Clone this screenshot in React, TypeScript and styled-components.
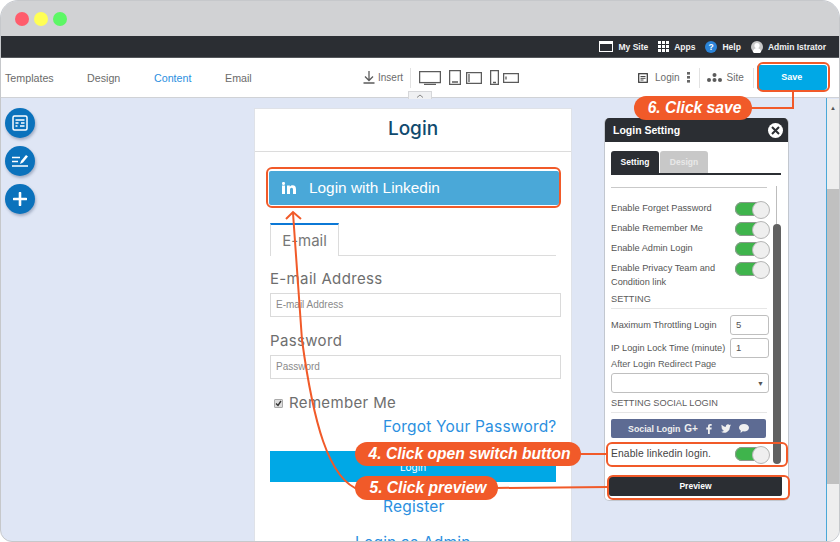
import React from "react";
import styled, { createGlobalStyle } from "styled-components";

const Global = createGlobalStyle`
  html, body { margin: 0; padding: 0; background: #fff; }
  * { box-sizing: border-box; }
  body { font-family: "Liberation Sans", Arial, sans-serif; }
`;

const Win = styled.div`
  position: relative; width: 840px; height: 542px; overflow: hidden;
  border-radius: 18px 18px 12px 12px; display: flex; flex-direction: column;
  background: #dfe6f5; border: 1px solid #c6c8cb;
`;
const TitleBar = styled.div`
  height: 35px; background: #d1d2d4; display: flex; align-items: center; gap: 5px; padding: 0 0 0 14px; flex: none;
`;
const Dot = styled.span<{ $c: string }>`
  width: 14px; height: 14px; border-radius: 50%; background: ${p => p.$c};
`;
const TopBar = styled.div`
  height: 22px; background: #2b2e33; flex: none; display: flex; justify-content: flex-end; align-items: center;
  gap: 10px; padding-right: 13px; color: #f2f2f2; font-size: 8.5px; font-weight: 700; border-bottom: 1px solid #55585c;
`;
const TopItem = styled.span`
  display: flex; align-items: center; gap: 5px; white-space: nowrap;
`;
const Toolbar = styled.div`
  height: 40px; background: #fff; flex: none; display: flex; align-items: center; border-bottom: 1px solid #d0d2d6;
  color: #6b6b6b; font-size: 10.7px; padding: 0 10px 0 4px;
`;
const NavLink = styled.span<{ $w: number; $on?: boolean }>`
  width: ${p => p.$w}px; flex: none; color: ${p => (p.$on ? "#2b8fe0" : "#6b6b6b")};
`;
const Spacer = styled.span<{ $w: number }>`
  width: ${p => p.$w}px; flex: none;
`;
const ToolItem = styled.span<{ $gap?: number }>`
  display: flex; align-items: center; gap: ${p => p.$gap ?? 3}px; font-size: 10px; flex: none; white-space: nowrap;
`;
const VLine = styled.span`
  width: 1px; height: 20px; background: #e2e2e2; flex: none;
`;
const SaveBtn = styled.button`
  width: 70px; height: 25px; border: 0; border-radius: 3px; background: #00a8e6; color: #fff; font: 700 9px "Liberation Sans", sans-serif; flex: none; padding: 0 0 1px;
`;
const ChevronTab = styled.div`
  position: absolute; left: 407px; top: 90px; width: 24px; height: 8px; background: #eff0f2;
  border: 1px solid #d6d7da; border-bottom: 0; display: flex; justify-content: center; align-items: center;
`;
const Canvas = styled.div`
  flex: 1; min-height: 0; display: flex; align-items: flex-start; padding: 10px 0 0 4px; border-right: 1px solid #4aa8d8;
  margin-right: 12px; position: relative;
`;
const Rail = styled.div`
  width: 30px; flex: none; display: flex; flex-direction: column; gap: 8px; margin-right: 219px;
`;
const RailBtn = styled.div`
  width: 30px; height: 30px; border-radius: 50%; background: #0b72bc; display: flex; align-items: center; justify-content: center;
  box-shadow: 1px 2px 3px rgba(40,60,100,.35);
`;
const Card = styled.div`
  width: 318px; height: 440px; flex: none; background: #fff; border: 1px solid #dfe2e8; overflow: hidden;
  font-family: Inter, sans-serif; color: #6e6e6e; margin-right: 32px;
`;
const CardHead = styled.div`
  height: 43px; border-bottom: 1px solid #dcdcdc; display: flex; align-items: center; justify-content: center;
  font-size: 19px; font-weight: 500; color: #0f4a6e; padding-bottom: 4px;
`;
const CardBody = styled.div`
  padding: 19px 14px 0 15px; display: flex; flex-direction: column;
`;
const LinkedBtn = styled.div`
  height: 34px; width: 290px; margin-left: -1px; background: #4aa8d8; border-radius: 2px; color: #fff; display: flex; align-items: center;
  font: 400 15.4px "Liberation Sans", sans-serif; gap: 13px; padding-left: 13px;
`;
const Tabs = styled.div`
  margin-top: 18px; width: 286px; height: 33px; border-bottom: 1px solid #dcdcdc; display: flex;
`;
const EmailTab = styled.div`
  width: 69px; height: 33px; border: 1px solid #dcdcdc; border-top: 2px solid #0b78d6; border-bottom: 0; background: #fff;
  font-size: 15px; display: flex; align-items: center; justify-content: center; color: #777;
`;
const FieldLabel = styled.div<{ $t: number }>`
  margin-top: ${p => p.$t}px; font-size: 15px; line-height: 18px; letter-spacing: .35px; color: #6e6e6e;
`;
const TextField = styled.div`
  margin-top: 5px; width: 291px; height: 24px; border: 1px solid #dadada; font: 10px/22px "Liberation Sans", sans-serif; color: #8a8a8a; padding-left: 5px;
`;
const Remember = styled.div`
  margin-top: 15px; display: flex; align-items: center; gap: 6px; font-size: 15px; line-height: 18px; letter-spacing: .35px; padding-left: 4px;
`;
const Box = styled.span`
  width: 9px; height: 9px; background: #ddd; border: 1px solid #aaa; border-radius: 1px; display: flex; align-items: center; justify-content: center;
`;
const BlueLink = styled.div<{ $t: number; $l: number }>`
  margin-top: ${p => p.$t}px; margin-left: ${p => p.$l}px; color: #2b8fe0; font-size: 15.5px; line-height: 19px; white-space: nowrap; letter-spacing: .2px;
`;
const LoginBtn = styled.div`
  margin-top: 15px; height: 31px; width: 286px; background: #00a8e6; color: #fff; font-size: 10px; display: flex; align-items: center; justify-content: center;
`;
const Panel = styled.div`
  margin-top: 10px; width: 185px; height: 383px; flex: none; background: #fff; border: 1px solid #c2c7cf; border-top: 0; border-radius: 5px;
  display: flex; flex-direction: column; position: relative; overflow: hidden; color: #555; font-size: 9.2px;
`;
const PanelHead = styled.div`
  height: 24px; flex: none; background: #2b2e33; color: #fff; font-weight: 700; font-size: 10.5px; display: flex; align-items: center; justify-content: space-between; padding: 0 5px 0 8px;
`;
const CloseBtn = styled.span`
  width: 15px; height: 15px; background: #fff; border-radius: 50%; display: flex; align-items: center; justify-content: center;
`;
const PanelTabs = styled.div`
  margin: 9px 7px 0 6px; height: 24px; flex: none; display: flex; gap: 1px; border-bottom: 2px solid #2b2e33;
`;
const PanelTab = styled.div<{ $on?: boolean }>`
  width: 48px; height: 22px; border-radius: 3px 3px 0 0; background: ${p => (p.$on ? "#2b2e33" : "#c8c8c8")}; color: ${p => (p.$on ? "#fff" : "#e8e8e8")};
  font-size: 8.5px; font-weight: 700; display: flex; align-items: center; justify-content: center;
`;
const PanelBody = styled.div`
  margin: 12px 0 0 6px; width: 156px; display: flex; flex-direction: column; flex: none;
`;
const Rule = styled.div<{ $c?: string }>`
  height: 1px; background: ${p => p.$c || "#e6e6e6"}; flex: none;
`;
const ToggleRow = styled.div<{ $h: number; $t?: number }>`
  display: flex; justify-content: space-between; align-items: flex-start; min-height: ${p => p.$h}px; margin-top: ${p => p.$t ?? 0}px; line-height: 14px; width: 158px;
`;
const Toggle = styled.span`
  width: 34px; height: 14px; border-radius: 7px; background: #3fb44c; position: relative; flex: none; margin-top: 1px; box-shadow: inset 0 0 0 1px #8a9a8c;
  &::after { content: ""; position: absolute; right: -1px; top: -1px; width: 16px; height: 16px; border-radius: 50%; background: #efefef; border: 1px solid #b5b5b5; }
`;
const SectionTitle = styled.div<{ $t: number; $h: number }>`
  margin-top: ${p => p.$t}px; line-height: 12px; height: ${p => p.$h}px; color: #5c5c5c;
`;
const InputRow = styled.div<{ $t: number }>`
  margin-top: ${p => p.$t}px; display: flex; justify-content: space-between; align-items: center; width: 158px; height: 19px;
`;
const SmallInput = styled.div`
  width: 39px; height: 20px; border: 1px solid #bfbfbf; border-radius: 3px; line-height: 18px; padding-left: 5px; font-size: 9.5px;
`;
const SelectBox = styled.div`
  margin-top: 3px; width: 158px; height: 20px; border: 1px solid #bfbfbf; border-radius: 3px; display: flex; align-items: center; justify-content: flex-end; padding-right: 4px; font-size: 7px; color: #555;
`;
const SocialBtn = styled.div`
  margin-top: 6px; width: 155px; height: 19px; background: #5d6b93; border-radius: 2px; color: #f0f0f0; font-weight: 700; font-size: 8.8px; display: flex; align-items: center; justify-content: center; gap: 8px;
`;
const GPlus = styled.span`
  font-size: 10px; margin-left: -4px;
`;
const LinkedRow = styled.div`
  margin-top: 7px; display: flex; justify-content: space-between; align-items: center; width: 158px; height: 16px; color: #444; font-size: 10.3px; letter-spacing: .12px;
`;
const PanelThumb = styled.div`
  position: absolute; right: 7px; top: 106px; width: 8px; height: 240px; border-radius: 4px; background: #616161;
  &::before { content: ""; position: absolute; left: 3px; top: -38px; height: 38px; width: 1px; background: #bdbdbd; }
`;
const PreviewBtn = styled.div`
  position: absolute; left: 4px; bottom: 4px; width: 173px; height: 20px; border-radius: 2px; background: #2b2e33; color: #fff; font-weight: 700; font-size: 8.5px; display: flex; align-items: center; justify-content: center;
`;
const Scrollbar = styled.div`
  position: absolute; right: 0; top: 98px; bottom: 0; width: 12px; background: #eee; display: flex; flex-direction: column;
`;
const ScrollArrow = styled.div`
  height: 18px; color: #555; font-size: 6px; display: flex; justify-content: center; align-items: center;
`;
const ScrollThumb = styled.div`
  margin-top: 72px; height: 295px; background: #c0c0c0;
`;
const Frame = styled.div<{ $x: number; $y: number; $w: number; $h: number }>`
  position: absolute; left: ${p => p.$x}px; top: ${p => p.$y}px; width: ${p => p.$w}px; height: ${p => p.$h}px;
  border: 2px solid #f15a29; border-radius: 6px; pointer-events: none;
`;
const Pill = styled.div<{ $x: number; $y: number; $w: number }>`
  position: absolute; left: ${p => p.$x}px; top: ${p => p.$y}px; width: ${p => p.$w}px; height: 24px; border-radius: 12px; padding-left: 3px;
  background: #f15a29; color: #fff; font: italic 700 15.6px/24px "Liberation Sans", sans-serif; text-align: center; white-space: nowrap;
`;
const OverlaySvg = styled.svg`
  position: absolute; left: -1px; top: -1px; width: 840px; height: 542px; pointer-events: none;
`;

const s = { fill: "none", stroke: "#5b5b5b", strokeWidth: 1.3 };

export default function App() {
  return (
    <>
      <Global />
      <Win>
        <TitleBar>
          <Dot $c="#ff5c6c" />
          <Dot $c="#ffff55" />
          <Dot $c="#5cf765" />
        </TitleBar>
        <TopBar>
          <TopItem>
            <svg width="14" height="11" viewBox="0 0 14 11"><rect x=".5" y=".5" width="13" height="10" fill="none" stroke="#fff" /><rect x="0" y="0" width="14" height="3" fill="#fff" /></svg>
            My Site
          </TopItem>
          <TopItem>
            <svg width="11" height="11" viewBox="0 0 11 11" fill="#fff">
              {[0, 4, 8].flatMap(x => [0, 4, 8].map(y => <rect key={`${x}${y}`} x={x} y={y} width="3" height="3" />))}
            </svg>
            Apps
          </TopItem>
          <TopItem>
            <svg width="12" height="12" viewBox="0 0 12 12"><circle cx="6" cy="6" r="6" fill="#2b84d8" /><text x="6" y="9" textAnchor="middle" fontSize="8.5" fontWeight="700" fill="#fff">?</text></svg>
            Help
          </TopItem>
          <TopItem>
            <svg width="12" height="12" viewBox="0 0 12 12"><circle cx="6" cy="6" r="6" fill="#c9c9c9" /><circle cx="6" cy="4.5" r="2.6" fill="#fff" /><path d="M1.8 11c.6-3 2-4 4.2-4s3.6 1 4.2 4a6 6 0 0 1-8.4 0z" fill="#fff" /></svg>
            Admin Istrator
          </TopItem>
        </TopBar>
        <Toolbar>
          <NavLink $w={82}>Templates</NavLink>
          <NavLink $w={67}>Design</NavLink>
          <NavLink $w={71} $on>Content</NavLink>
          <NavLink $w={138}>Email</NavLink>
          <ToolItem>
            <svg width="12" height="13" viewBox="0 0 12 13"><path d="M6 0v9M2 5.500 6 9.500l4-4M.5 12h11" {...s} /></svg>
            Insert
          </ToolItem>
          <Spacer $w={7} />
          <VLine />
          <Spacer $w={8} />
          <svg width="22" height="14" viewBox="0 0 22 14"><rect x=".6" y=".6" width="20.8" height="11" {...s} /><path d="M5 13.400h12" {...s} /></svg>
          <Spacer $w={8} />
          <svg width="12" height="15" viewBox="0 0 12 15"><rect x=".6" y=".6" width="10.8" height="13.8" {...s} /><path d="M3 12h6" {...s} /></svg>
          <Spacer $w={5} />
          <svg width="16" height="12" viewBox="0 0 16 12"><rect x=".6" y=".6" width="14.8" height="10.8" {...s} /><path d="M3 2v8" {...s} /></svg>
          <Spacer $w={8} />
          <svg width="9" height="15" viewBox="0 0 9 15"><rect x=".6" y=".6" width="7.8" height="13.8" {...s} /><path d="M3 12.500h3" {...s} /></svg>
          <Spacer $w={4} />
          <svg width="16" height="10" viewBox="0 0 16 10"><rect x=".6" y=".6" width="14.8" height="8.8" {...s} /><path d="M3 3.500v3" {...s} /></svg>
          <Spacer $w={119} />
          <ToolItem $gap={7}>
            <svg width="10" height="10" viewBox="0 0 10 10"><rect x=".7" y=".7" width="8.6" height="8.6" fill="none" stroke="#333" strokeWidth="1.2" /><path d="M2.500 3.500h5M2.500 5.300h5M2.500 7h3" stroke="#333" strokeWidth=".9" /></svg>
            Login
          </ToolItem>
          <Spacer $w={8} />
          <svg width="3" height="11" viewBox="0 0 3 11" fill="#666"><rect y="0" width="3" height="2.6" /><rect y="4" width="3" height="2.6" /><rect y="8" width="3" height="2.6" /></svg>
          <Spacer $w={9} />
          <VLine />
          <Spacer $w={7} />
          <ToolItem $gap={4}>
            <svg width="15" height="9" viewBox="0 0 15 9" fill="#5b5b5b"><circle cx="7.500" cy="2" r="2" /><circle cx="2" cy="7" r="2" /><circle cx="7.500" cy="7" r="2" /><circle cx="13" cy="7" r="2" /></svg>
            Site
          </ToolItem>
          <Spacer $w={9} />
          <VLine />
          <Spacer $w={3} />
          <SaveBtn>Save</SaveBtn>
        </Toolbar>
        <ChevronTab>
          <svg width="8" height="4" viewBox="0 0 8 4"><path d="M1 3.500 4 1l3 2.500" fill="none" stroke="#888" /></svg>
        </ChevronTab>
        <Canvas>
          <Rail>
            <RailBtn>
              <svg width="16" height="16" viewBox="0 0 16 16"><rect x="1" y="1" width="14" height="14" rx="1.5" fill="none" stroke="#fff" strokeWidth="1.5" /><path d="M3.500 5h9M3.500 8h3M9 8h3.500M3.500 11h2M8 11h4.500" stroke="#fff" strokeWidth="1.4" /></svg>
            </RailBtn>
            <RailBtn>
              <svg width="18" height="16" viewBox="0 0 18 16"><path d="M1 4.500h8M1 8.500h6M1 13h16" stroke="#fff" strokeWidth="1.7" /><path d="M9 11l1-3 5-6 2 1.500-5 6z" fill="#fff" /></svg>
            </RailBtn>
            <RailBtn>
              <svg width="14" height="14" viewBox="0 0 14 14"><path d="M7 1v12M1 7h12" stroke="#fff" strokeWidth="2.6" strokeLinecap="round" /></svg>
            </RailBtn>
          </Rail>
          <Card>
            <CardHead>Login</CardHead>
            <CardBody>
              <LinkedBtn>
                <svg width="14" height="12" viewBox="0 0 14 12" fill="#fff"><rect x="0" y="3.500" width="3" height="8.500" /><circle cx="1.500" cy="1.400" r="1.500" /><path d="M5 3.500h2.800v1.300c.5-.9 1.500-1.500 2.800-1.500 2.400 0 3.400 1.500 3.400 4V12h-3V7.800c0-1.200-.4-2-1.400-2s-1.600.8-1.600 2V12H5z" /></svg>
                Login with Linkedin
              </LinkedBtn>
              <Tabs>
                <EmailTab>E-mail</EmailTab>
              </Tabs>
              <FieldLabel $t={14}>E-mail Address</FieldLabel>
              <TextField>E-mail Address</TextField>
              <FieldLabel $t={15}>Password</FieldLabel>
              <TextField>Password</TextField>
              <Remember>
                <Box>
                  <svg width="7" height="7" viewBox="0 0 7 7"><path d="M1 3.500l2 2L6 1" fill="none" stroke="#333" strokeWidth="1.4" /></svg>
                </Box>
                Remember Me
              </Remember>
              <BlueLink $t={5} $l={113}>Forgot Your Password?</BlueLink>
              <LoginBtn>Login</LoginBtn>
              <BlueLink $t={15} $l={113}>Register</BlueLink>
              <BlueLink $t={17} $l={85}>Login as Admin</BlueLink>
            </CardBody>
          </Card>
          <Panel>
            <PanelHead>
              Login Setting
              <CloseBtn>
                <svg width="9" height="9" viewBox="0 0 9 9"><path d="M1 1l7 7M8 1 1 8" stroke="#2b2e33" strokeWidth="2" /></svg>
              </CloseBtn>
            </PanelHead>
            <PanelTabs>
              <PanelTab $on>Setting</PanelTab>
              <PanelTab>Design</PanelTab>
            </PanelTabs>
            <PanelBody>
              <Rule $c="#c9c9c9" />
              <ToggleRow $h={20} $t={13}>Enable Forget Password<Toggle /></ToggleRow>
              <ToggleRow $h={20}>Enable Remember Me<Toggle /></ToggleRow>
              <ToggleRow $h={20}>Enable Admin Login<Toggle /></ToggleRow>
              <ToggleRow $h={28}>
                <span>Enable Privacy Team and<br />Condition link</span>
                <Toggle />
              </ToggleRow>
              <SectionTitle $t={4} $h={15}>SETTING</SectionTitle>
              <Rule />
              <InputRow $t={6}>Maximum Throttling Login<SmallInput>5</SmallInput></InputRow>
              <InputRow $t={4}>IP Login Lock Time (minute)<SmallInput>1</SmallInput></InputRow>
              <SectionTitle $t={1} $h={12}>After Login Redirect Page</SectionTitle>
              <SelectBox>▼</SelectBox>
              <SectionTitle $t={4} $h={15}>SETTING SOCIAL LOGIN</SectionTitle>
              <Rule />
              <SocialBtn>
                Social Login
                <GPlus>G+</GPlus>
                <svg width="7" height="10" viewBox="0 0 7 10" fill="#f0f0f0"><path d="M2 10V5.500H.3V3.600H2V2.400C2 .8 3 0 4.300 0c.7 0 1.200 0 1.400.1v1.700h-1c-.7 0-.9.3-.9.9v.9h1.900l-.2 1.900H3.800V10z" /></svg>
                <svg width="10" height="9" viewBox="0 0 24 20" fill="#f0f0f0"><path d="M24 2.400c-.9.4-1.800.7-2.800.8 1-.6 1.800-1.600 2.200-2.700-1 .6-2 1-3.100 1.200A4.900 4.900 0 0 0 11.900 6C7.800 5.800 4.200 3.900 1.700.9.400 3.100 1 6 3.200 7.500c-.8 0-1.600-.2-2.200-.6 0 2.300 1.600 4.400 3.900 4.900-.7.200-1.500.2-2.200.1.600 2 2.400 3.400 4.600 3.400A9.900 9.900 0 0 1 0 17.800 14 14 0 0 0 21.500 5.400c1-.7 1.800-1.700 2.500-3z" /></svg>
                <svg width="10" height="9" viewBox="0 0 10 9" fill="#f0f0f0"><path d="M5 0c2.800 0 5 1.600 5 3.700S7.800 7.400 5 7.400c-.5 0-.9 0-1.300-.1L1.500 9l.3-2.500C.7 5.800 0 4.800 0 3.700 0 1.600 2.200 0 5 0z" /></svg>
              </SocialBtn>
              <LinkedRow>Enable linkedin login.<Toggle /></LinkedRow>
            </PanelBody>
            <PanelThumb />
            <PreviewBtn>Preview</PreviewBtn>
          </Panel>
        </Canvas>
        <Scrollbar>
          <ScrollArrow>▲</ScrollArrow>
          <ScrollThumb />
        </Scrollbar>

        <OverlaySvg viewBox="0 0 840 542">
          <g fill="none" stroke="#f15a29" strokeWidth="2">
            <path d="M793 91v17h-45" />
            <path d="M578 454h30" />
            <path d="M495 488l113-1" />
            <path d="M360 490C328 480 313 420 302 340L293 213" />
            <path d="M286 219l7-7 8 7" />
          </g>
        </OverlaySvg>
        <Frame $x={756} $y={61} $w={73} $h={30} />
        <Frame $x={265} $y={166} $w={295} $h={41} />
        <Frame $x={605} $y={441} $w={182} $h={25} />
        <Frame $x={606} $y={474} $w={183} $h={25} />
        <Pill $x={633} $y={95} $w={118}>6. Click save</Pill>
        <Pill $x={354} $y={441} $w={226}>4. Click open switch button</Pill>
        <Pill $x={354} $y={475} $w={143}>5. Click preview</Pill>
      </Win>
    </>
  );
}
